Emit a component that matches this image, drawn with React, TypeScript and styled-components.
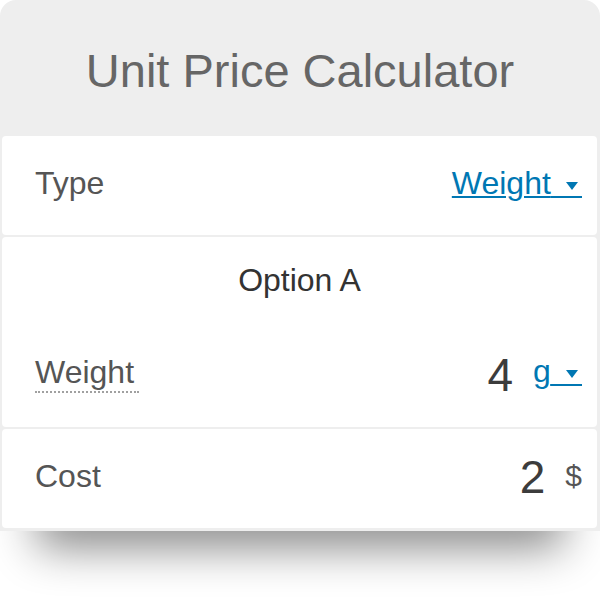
import React from "react";
import styled, {createGlobalStyle} from "styled-components";

const GlobalStyle = createGlobalStyle`
  html, body {
    margin: 0;
    padding: 0;
    background: #ffffff;
  }
  body {
    font-family: "Liberation Sans", Arial, sans-serif;
  }
`;

const Page = styled.div`
  width: 600px;
  height: 600px;
  overflow: hidden;
  background: #ffffff;
`;

const Card = styled.div`
  width: 600px;
  height: 531px;
  background: #eeeeee;
  border-radius: 16px 16px 0 0;
  overflow: hidden;
`;

const Header = styled.h1`
  margin: 0;
  height: 136px;
  box-sizing: border-box;
  padding-top: 5px;
  display: flex;
  align-items: center;
  justify-content: center;
  font-size: 47px;
  font-weight: 400;
  color: #666666;
`;

const Body = styled.div`
  display: flex;
  flex-direction: column;
  gap: 2px;
  padding: 0 3px 0 2px;
`;

const Panel = styled.div`
  background: #ffffff;
  border-radius: 4px;
  display: flex;
  flex-direction: column;
`;

const Row = styled.div<{$height: number; $lift: number}>`
  height: ${(p) => p.$height}px;
  box-sizing: border-box;
  padding: 0 15px ${(p) => p.$lift}px 33px;
  display: flex;
  align-items: center;
  justify-content: space-between;
`;

const SectionTitle = styled.div`
  height: 86px;
  display: flex;
  align-items: center;
  justify-content: center;
  font-size: 32px;
  color: #333333;
`;

const Label = styled.span<{$dotted?: boolean}>`
  font-size: 32px;
  color: #555555;
  line-height: 1.15;
  ${(p) =>
    p.$dotted &&
    `
    border-bottom: 2px dotted #a0a0a0;
    padding-bottom: 1px;
    padding-right: 5px;
  `}
`;

const Value = styled.div`
  display: flex;
  align-items: center;
`;

const Number = styled.span`
  font-size: 46px;
  line-height: 1;
  color: #3c3c3c;
  margin: 2px 20px 0 0;
`;

const Select = styled.span<{$inline?: boolean}>`
  font-size: 32px;
  line-height: 1.15;
  color: #0077b3;
  text-decoration: underline;
  text-decoration-thickness: 2px;
  text-underline-offset: 2px;
  margin-bottom: ${(p) => (p.$inline ? 4 : 0)}px;
`;

// spacer text carries the underline, the triangle sits over it
const Caret = styled.span`
  position: relative;
  letter-spacing: 1.5px;

  &::after {
    content: "";
    position: absolute;
    right: 4px;
    bottom: 11px;
    width: 0;
    height: 0;
    border-left: 6.5px solid transparent;
    border-right: 6.5px solid transparent;
    border-top: 8px solid #0077b3;
  }
`;

const Unit = styled.span`
  font-size: 30px;
  line-height: 1.15;
  color: #555555;
`;

const Fade = styled.div`
  position: relative;
  height: 69px;
  overflow: hidden;

  &::before {
    content: "";
    position: absolute;
    top: -40px;
    left: 45px;
    right: 45px;
    height: 40px;
    box-shadow: 0 8px 45px 8px rgba(0, 0, 0, 0.48);
  }
`;

const caretSpace = "\u00a0\u00a0\u00a0";

export default function App() {
  return (
    <Page>
      <GlobalStyle />
      <Card>
        <Header>Unit Price Calculator</Header>
        <Body>
          <Panel>
            <Row $height={99} $lift={5}>
              <Label>Type</Label>
              <Select>
                Weight<Caret>{caretSpace}</Caret>
              </Select>
            </Row>
          </Panel>
          <Panel>
            <SectionTitle>Option A</SectionTitle>
            <Row $height={104} $lift={3}>
              <Label $dotted>Weight</Label>
              <Value>
                <Number>4</Number>
                <Select $inline>
                  g<Caret>{caretSpace}</Caret>
                </Select>
              </Value>
            </Row>
          </Panel>
          <Panel>
            <Row $height={99} $lift={5}>
              <Label>Cost</Label>
              <Value>
                <Number>2</Number>
                <Unit>$</Unit>
              </Value>
            </Row>
          </Panel>
        </Body>
      </Card>
      <Fade />
    </Page>
  );
}
